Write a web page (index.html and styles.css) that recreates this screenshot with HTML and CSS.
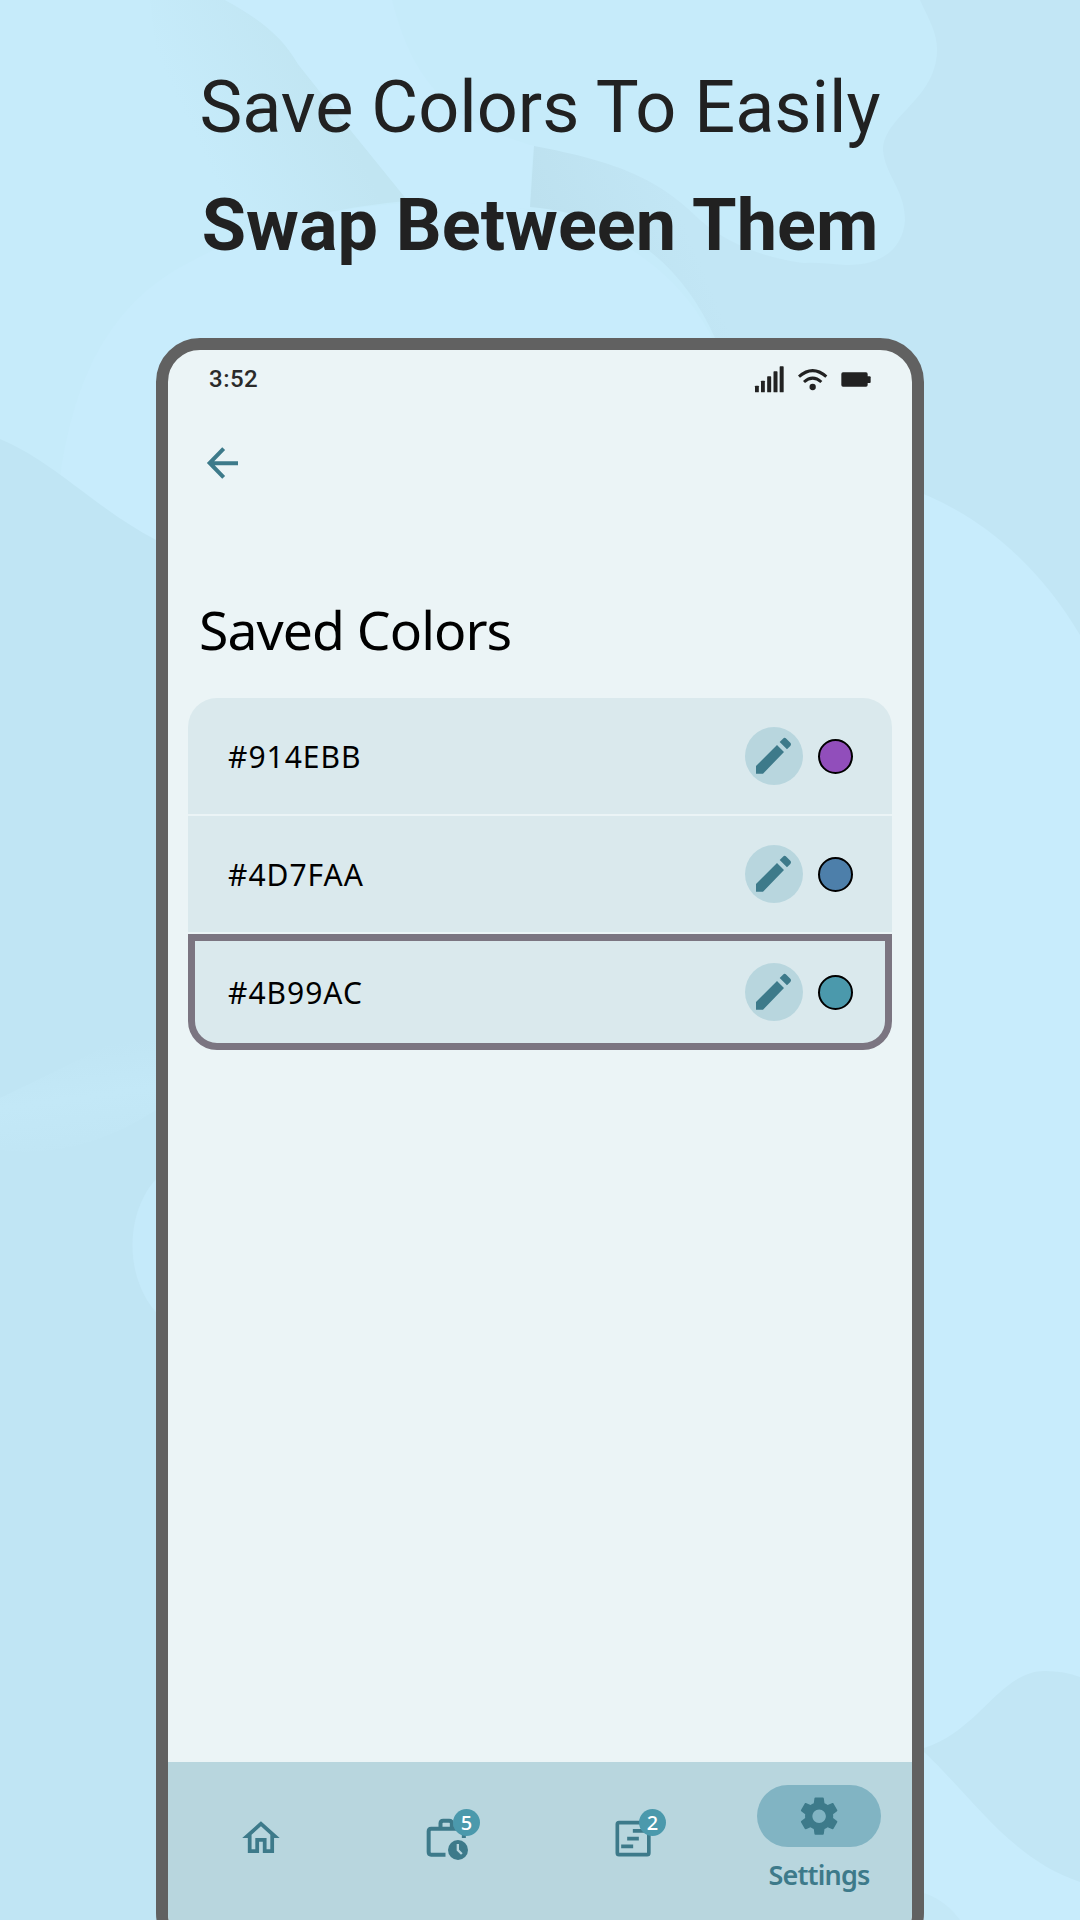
FILE: index.html
```html
<!DOCTYPE html>
<html lang="en">
<head>
<meta charset="utf-8">
<title>Saved Colors</title>
<link rel="stylesheet" href="styles.css">
</head>
<body>
<div class="poster">
  <svg class="backdrop" viewBox="0 0 1080 1920" aria-hidden="true">
    <defs>
      <linearGradient id="fold" x1="210" y1="170" x2="340" y2="110" gradientUnits="userSpaceOnUse">
        <stop offset="0" stop-color="#c1e5f2" stop-opacity="0"/>
        <stop offset="1" stop-color="#c1e5f2"/>
      </linearGradient>
      <linearGradient id="crease" x1="530" y1="190" x2="650" y2="140" gradientUnits="userSpaceOnUse">
        <stop offset="0" stop-color="#bde1ef"/>
        <stop offset="1" stop-color="#c2e6f5"/>
      </linearGradient>
      <linearGradient id="streak" x1="60" y1="1050" x2="75" y2="1160" gradientUnits="userSpaceOnUse">
        <stop offset="0" stop-color="#c3e8f7" stop-opacity="0"/>
        <stop offset=".45" stop-color="#c3e8f7"/>
        <stop offset="1" stop-color="#c3e8f7" stop-opacity="0"/>
      </linearGradient>
    </defs>
    <rect width="1080" height="1920" fill="#c2e6f5"/>
    <path fill="#c6ebfa" d="M0 0H920C929 20 938 34 937 52C935 100 884 116 883 150C885 175 905 190 905 220C903 250 880 266 845 265C800 262 760 250 715 338V560H0Z"/>
    <path fill="url(#fold)" d="M150 0H225C262 20 283 38 298 64L344 122L408 201C300 210 230 240 180 265Z"/>
    <path fill="#c8ecfc" d="M225 0H392C410 70 440 120 534 146Q530 175 530 209L408 201L344 122L298 64C283 38 262 20 225 0Z"/>
    <path fill="url(#crease)" d="M534 146C620 162 660 180 700 220C740 255 800 267 845 265L900 338H715C680 260 620 215 530 207Z"/>
    <path fill="#c8ecfc" d="M60 478C75 370 115 300 190 262C290 208 400 196 500 205C610 220 680 270 716 345V560H150Z"/>
    <path fill="#c0e5f4" d="M0 439C55 462 95 508 156 540H300V1920H0Z"/>
    <path fill="url(#streak)" d="M0 1098Q80 1060 156 1020V1110Q80 1160 0 1150Z"/>
    <path fill="#c5eafa" d="M170 1167C120 1200 120 1290 170 1325Z"/>
    <path fill="#c8ecfc" d="M900 485C975 510 1035 560 1080 635V1920H900Z"/>
    <path fill="#c2e6f5" d="M924 1748C980 1730 1000 1671 1045 1671Q1065 1671 1080 1677V1882C1010 1858 975 1800 924 1752Z"/>
    <path fill="#c4e8f7" d="M924 1893Q945 1900 960 1920H924Z"/>
  </svg>

  <header class="headline">
    <div class="headline-top">Save Colors To Easily</div>
    <div class="headline-bottom">Swap Between Them</div>
  </header>

  <main class="phone">
    <div class="status">
      <span class="clock">3:52</span>
      <svg class="status-icons" viewBox="70 100 360 90" aria-hidden="true">
        <g fill="#222">
          <rect x="76" y="165" width="11.500" height="20" rx="2"/>
          <rect x="94" y="150" width="11.500" height="35" rx="2"/>
          <rect x="112.500" y="137" width="12" height="48" rx="2"/>
          <rect x="131.500" y="122" width="12" height="63" rx="2"/>
          <rect x="150" y="107" width="12" height="78" rx="2"/>
          <circle cx="249" cy="169" r="9.500"/>
          <rect x="335" y="125" width="79" height="43" rx="5"/>
          <rect x="405" y="137" width="18" height="20" rx="3"/>
        </g>
        <path fill="none" stroke="#222" stroke-width="9" d="M208 138Q249 102 290 138M223 154Q249 131 275 154"/>
      </svg>
    </div>
    <svg class="back" viewBox="165 345 105 105" aria-label="Back">
      <path fill="none" stroke="#3d7a8a" stroke-width="12" d="M221 356L179 399L221 442M177 399.500H264"/>
    </svg>
    <h1 class="title">Saved Colors</h1>

    <ul class="colors">
      <li class="color">
        <span class="hex">#914EBB</span>
        <span class="edit"><svg viewBox="74 111 174 174"><path d="M107 228L170 165L191 186L128 251H107ZM178 156L188 146Q193 141 198 146L210 158Q214 163 210 168L200 178Z"/></svg></span>
        <span class="swatch purple"></span>
      </li>
      <li class="color">
        <span class="hex">#4D7FAA</span>
        <span class="edit"><svg viewBox="74 111 174 174"><path d="M107 228L170 165L191 186L128 251H107ZM178 156L188 146Q193 141 198 146L210 158Q214 163 210 168L200 178Z"/></svg></span>
        <span class="swatch blue"></span>
      </li>
      <li class="color selected">
        <span class="hex">#4B99AC</span>
        <span class="edit"><svg viewBox="74 111 174 174"><path d="M107 228L170 165L191 186L128 251H107ZM178 156L188 146Q193 141 198 146L210 158Q214 163 210 168L200 178Z"/></svg></span>
        <span class="swatch teal"></span>
      </li>
    </ul>

    <nav class="tabs">
      <div class="tab">
        <svg class="icon" viewBox="0.300 -0.300 24 24"><path fill="#3d7a8a" d="M12 5.690l5 4.500V18h-2v-6H9v6H7v-7.810l5-4.500M12 3L2 12h3v8h6v-6h2v6h6v-8h3L12 3z"/></svg>
      </div>
      <div class="tab">
        <svg class="icon" viewBox="825.500 195 135 135">
          <path fill="none" stroke="#3d7a8a" stroke-width="12" d="M887 314H844Q836.500 314 836.500 306V244Q836.500 236 844 236H934Q942 236 942 244V264M872 236V220Q872 212 880 212H898Q906 212 906 220V236"/>
          <circle cx="924.500" cy="300" r="30" fill="#3d7a8a"/>
          <path fill="none" stroke="#b8d6de" stroke-width="7" d="M924 282V300L936 312"/>
        </svg>
        <span class="badge">5</span>
      </div>
      <div class="tab">
        <svg class="icon" viewBox="181.500 195 135 135">
          <rect x="200.500" y="218" width="94.500" height="96" rx="5" fill="none" stroke="#3d7a8a" stroke-width="11"/>
          <path fill="none" stroke="#3d7a8a" stroke-width="11" d="M247 242.500H283M230 266H265M212 289H248"/>
        </svg>
        <span class="badge">2</span>
      </div>
      <div class="tab active">
        <span class="pill">
          <svg class="icon" viewBox="0.200 0.200 24 24"><path fill="#3d7a8a" d="M19.430 12.980c.04-.32.07-.64.07-.98s-.03-.66-.07-.98l2.110-1.650c.19-.15.24-.42.12-.64l-2-3.460c-.12-.22-.39-.3-.61-.22l-2.490 1c-.52-.4-1.080-.73-1.690-.98l-.38-2.650C14.460 2.180 14.250 2 14 2h-4c-.25 0-.46.18-.49.42l-.38 2.650c-.61.25-1.170.59-1.690.98l-2.490-1c-.23-.09-.49 0-.61.22l-2 3.460c-.13.22-.07.49.12.64l2.110 1.650c-.04.32-.07.65-.07.98s.03.66.07.98l-2.110 1.650c-.19.15-.24.42-.12.64l2 3.460c.12.22.39.3.61.22l2.490-1c.52.4 1.080.73 1.690.98l.38 2.650c.03.24.24.42.49.42h4c.25 0 .46-.18.49-.42l.38-2.650c.61-.25 1.170-.59 1.690-.98l2.490 1c.23.09.49 0 .61-.22l2-3.460c.12-.22.07-.49-.12-.64l-2.110-1.650zM12 15.600c-1.980 0-3.600-1.620-3.600-3.600s1.620-3.600 3.600-3.600 3.600 1.620 3.600 3.600-1.620 3.600-3.600 3.600z"/></svg>
        </span>
        <span class="label">Settings</span>
      </div>
    </nav>
  </main>
</div>
</body>
</html>
```
FILE: styles.css
```css
* { box-sizing: border-box; }
body { margin: 0; }

.poster {
  position: relative;
  width: 1080px;
  height: 1920px;
  overflow: hidden;
  display: flex;
  flex-direction: column;
  align-items: center;
}
.backdrop { position: absolute; inset: 0; width: 1080px; height: 1920px; }

.headline {
  position: relative;
  height: 338px;
  flex: none;
  padding-top: 49px;
  font-family: Roboto, sans-serif;
  font-size: 72px;
  line-height: 118px;
  color: #212121;
  text-align: center;
  white-space: nowrap;
}
.headline-bottom { font-weight: 700; }

.phone {
  position: relative;
  width: 768px;
  height: 1619px;
  flex: none;
  display: flex;
  flex-direction: column;
  border: 12px solid #616161;
  border-radius: 44px;
  background: #ebf4f6;
  overflow: hidden;
  font-family: "Noto Sans", sans-serif;
  color: #000;
}

.status {
  height: 58px;
  padding: 0 39px 0 41px;
  display: flex;
  justify-content: space-between;
  align-items: center;
}
.clock { font: 500 24px/28px Roboto, sans-serif; color: #2a2a2a; letter-spacing: .5px; }
.status-icons { width: 120px; height: 30px; }

.back { width: 35px; height: 35px; margin: 37px 0 0 37px; flex: none; }

.title {
  margin: 111px 0 0 31px;
  font-size: 53.500px;
  line-height: 78px;
  font-weight: 400;
  letter-spacing: -.95px;
  white-space: nowrap;
}

.colors {
  list-style: none;
  margin: 29px 20px 0;
  padding: 0;
  display: flex;
  flex-direction: column;
  gap: 2px;
}
.color {
  height: 116px;
  padding: 0 39px 0 40px;
  display: flex;
  align-items: center;
  background: #dae9ed;
}
.color:first-child { border-radius: 29px 29px 0 0; }
.selected {
  border: 7px solid #7b7581;
  border-radius: 0 0 29px 29px;
  padding: 0 32px 0 33px;
}
.hex { flex: 1; padding-top: 2px; font-size: 30px; line-height: 40px; letter-spacing: 1px; }
.edit { width: 58px; height: 58px; border-radius: 50%; background: #b8d6de; margin-right: 15px; }
.edit svg { display: block; width: 58px; height: 58px; fill: #3d7a8a; }
.swatch { width: 35px; height: 35px; border: 2px solid #000; border-radius: 50%; }
.purple { background: #914ebb; }
.blue { background: #4d7faa; }
.teal { background: #4b99ac; }

.tabs {
  margin-top: auto;
  height: 183px;
  flex: none;
  display: grid;
  grid-template-columns: repeat(4, 1fr);
  background: #b8d6de;
}
.tab { position: relative; display: flex; flex-direction: column; align-items: center; padding-top: 53px; }
.tab.active { padding-top: 23px; }
.icon { display: block; width: 45px; height: 45px; }
.badge {
  position: absolute;
  left: 99px;
  top: 47px;
  width: 27px;
  height: 27px;
  border-radius: 50%;
  background: #4b99ac;
  color: #fff;
  font-size: 20px;
  font-weight: 500;
  line-height: 27px;
  text-align: center;
}
.pill {
  width: 124px;
  height: 62px;
  border-radius: 31px;
  background: #81b4c3;
  display: flex;
  align-items: center;
  justify-content: center;
}
.label { margin-top: 10px; font-size: 27px; line-height: 36px; font-weight: 600; letter-spacing: -.8px; color: #3d7a8a; }
```
